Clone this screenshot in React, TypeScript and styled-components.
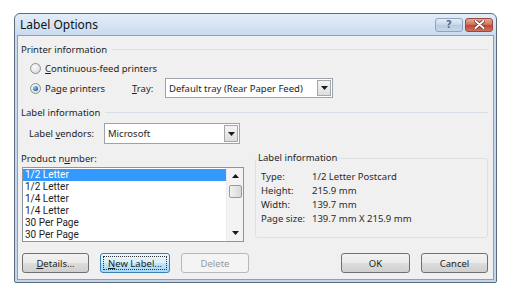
import React from 'react';
import styled, { createGlobalStyle } from 'styled-components';

const GlobalStyle = createGlobalStyle`
  html, body {
    margin: 0;
    padding: 0;
    background: #fff;
  }
  body {
    font-family: "Noto Sans", "Open Sans", sans-serif;
    font-size: 9.5px;
    color: #1e1e1e;
  }
`;

const Desktop = styled.div`
  width: 511px;
  height: 304px;
  padding: 13px 0 0 14px;
  box-sizing: border-box;
`;

const Window = styled.div`
  width: 483px;
  height: 270px;
  box-sizing: border-box;
  border: 1px solid #5d6c7d;
  border-radius: 6px 6px 2px 2px;
  background: linear-gradient(#e3edf8, #c9dbef 21px, #c3d6ec);
  display: flex;
  flex-direction: column;
  padding: 0 2px 2px 2px;
`;

const TitleBar = styled.div`
  height: 21px;
  display: flex;
  align-items: center;
  padding-left: 3px;
`;

const TitleText = styled.div`
  flex: 1;
  font-size: 12px;
  color: #111;
`;

const CaptionButton = styled.div<{ $close?: boolean }>`
  width: 28px;
  height: 14px;
  box-sizing: border-box;
  border: 1px solid ${({ $close }) => ($close ? '#9a4a3c' : '#8ea3bd')};
  border-radius: 3px;
  margin-left: 2px;
  display: flex;
  align-items: center;
  justify-content: center;
  background: ${({ $close }) =>
    $close
      ? 'linear-gradient(#e7a79a, #d47562 45%, #c2432e 50%, #d0705a)'
      : 'linear-gradient(#e4edf7, #cbd9ea 45%, #b9cbe1 50%, #c7d7ea)'};
  color: #5a6d86;
  font-family: "DejaVu Sans", sans-serif;
  font-weight: bold;
  font-size: 10px;
  &:last-child {
    margin-right: 1px;
  }
`;

const Client = styled.div`
  flex: 1;
  background: #f0f0f0;
  border: 1px solid #8aa0b8;
  padding: 0 5px 0 4px;
  display: flex;
  flex-direction: column;
`;

const SectionHeader = styled.div<{ $top: number }>`
  display: flex;
  align-items: center;
  height: 14px;
  margin-top: ${({ $top }) => $top}px;
  margin-left: -1px;
  &::after {
    content: '';
    flex: 1;
    height: 0;
    border-top: 1px solid #d9dfe6;
    margin-left: 5px;
  }
`;

const Row = styled.div<{ $top: number; $h: number; $indent: number }>`
  display: flex;
  align-items: center;
  height: ${({ $h }) => $h}px;
  margin-top: ${({ $top }) => $top}px;
  padding-left: ${({ $indent }) => $indent}px;
`;

const RadioOption = styled.div<{ $width?: number }>`
  display: flex;
  align-items: center;
  width: ${({ $width }) => ($width ? `${$width}px` : 'auto')};
`;

const RadioCircle = styled.span<{ $checked?: boolean }>`
  width: 11px;
  height: 11px;
  box-sizing: border-box;
  border-radius: 50%;
  border: 1px solid #8d9196;
  background: radial-gradient(circle at 40% 35%, #fdfdfd, #d9dadc 80%);
  margin-right: 4px;
  display: flex;
  align-items: center;
  justify-content: center;
  &::after {
    content: '';
    display: ${({ $checked }) => ($checked ? 'block' : 'none')};
    width: 5px;
    height: 5px;
    border-radius: 50%;
    background: radial-gradient(circle at 35% 35%, #8fd0f5, #1b5f93 75%);
  }
`;

const FieldLabel = styled.span<{ $width: number }>`
  width: ${({ $width }) => $width}px;
  flex-shrink: 0;
`;

const Combo = styled.div<{ $width: number }>`
  width: ${({ $width }) => $width}px;
  height: 100%;
  box-sizing: border-box;
  border: 1px solid #9da3ab;
  background: #fff;
  display: flex;
  align-items: center;
  padding: 1px 1px 1px 3px;
`;

const ComboText = styled.span`
  flex: 1;
`;

const DropButton = styled.span`
  width: 14px;
  height: 100%;
  box-sizing: border-box;
  border: 1px solid #a4a8ad;
  background: linear-gradient(#f4f4f4, #dedede);
  display: flex;
  align-items: center;
  justify-content: center;
`;

const Middle = styled.div`
  display: flex;
  align-items: flex-start;
`;

const LeftColumn = styled.div`
  width: 223px;
  display: flex;
  flex-direction: column;
`;

const PlainLabel = styled.div`
  height: 14px;
  display: flex;
  align-items: center;
  margin-top: 7px;
  margin-left: -1px;
`;

const ListBox = styled.div`
  margin-top: 2px;
  height: 75px;
  box-sizing: border-box;
  border: 1px solid #8f959c;
  background: #fff;
  display: flex;
`;

const ListItems = styled.div`
  flex: 1;
  padding-top: 1px;
  font-family: Roboto, "Noto Sans", sans-serif;
  font-size: 10px;
`;

const ListItem = styled.div<{ $selected?: boolean }>`
  height: 12px;
  line-height: 12px;
  padding-left: 2px;
  background: ${({ $selected }) => ($selected ? '#3399ff' : 'transparent')};
  color: ${({ $selected }) => ($selected ? '#fff' : '#1e1e1e')};
`;

const ScrollBar = styled.div`
  width: 16px;
  background: #f3f3f3;
  border-left: 1px solid #ececec;
  display: flex;
  flex-direction: column;
  align-items: center;
`;

const ScrollArrow = styled.div`
  height: 16px;
  width: 100%;
  display: flex;
  align-items: center;
  justify-content: center;
`;

const ScrollThumb = styled.div`
  width: 13px;
  height: 13px;
  box-sizing: border-box;
  margin-top: 1px;
  border: 1px solid #9a9a9a;
  border-radius: 2px;
  background: linear-gradient(90deg, #f2f2f2, #d8d8d8);
`;

const ScrollSpacer = styled.div`
  flex: 1;
`;

const GroupBox = styled.fieldset`
  margin: 7px 0 0 11px;
  width: 234px;
  height: 87px;
  box-sizing: border-box;
  border: 1px solid #dcdfe3;
  border-radius: 3px;
  padding: 4px 5px 0 5px;
`;

const GroupLegend = styled.legend`
  padding: 0 1px;
  margin-left: -4px;
  line-height: 14px;
`;

const InfoGrid = styled.div`
  display: grid;
  grid-template-columns: 51px 1fr;
  grid-auto-rows: 14px;
  align-items: center;
  color: #2a2a2a;
`;

const ButtonRow = styled.div`
  display: flex;
  align-items: center;
  margin-top: 11px;
  gap: 11px;
`;

const Spacer = styled.div`
  flex: 1;
`;

const PushButton = styled.div<{ $width: number; $focused?: boolean; $disabled?: boolean }>`
  width: ${({ $width }) => $width}px;
  height: 20px;
  box-sizing: border-box;
  border: 1px solid ${({ $focused, $disabled }) => ($focused ? '#3c7fb1' : $disabled ? '#b5b8bc' : '#707070')};
  border-radius: 3px;
  padding: 2px;
  background: ${({ $focused, $disabled }) =>
    $focused
      ? 'linear-gradient(#eaf6fd, #d9f0fc 48%, #bee6fd 50%, #a7d9f5)'
      : $disabled
      ? '#f4f4f4'
      : 'linear-gradient(#f2f2f2, #ebebeb 48%, #dddddd 50%, #cfcfcf)'};
  color: ${({ $disabled }) => ($disabled ? '#9a9a9a' : '#1e1e1e')};
  display: flex;
`;

const ButtonFace = styled.div<{ $focused?: boolean }>`
  flex: 1;
  display: flex;
  align-items: center;
  justify-content: center;
  border: 1px dotted ${({ $focused }) => ($focused ? '#333' : 'transparent')};
`;

const Tri = ({ up }: { up?: boolean }) => (
  <svg width="7" height="4" viewBox="0 0 7 4">
    <path d={up ? 'M0 4 L3.5 0 L7 4 Z' : 'M0 0 L7 0 L3.5 4 Z'} fill="#1a1a1a" />
  </svg>
);

const CloseIcon = () => (
  <svg width="11" height="9" viewBox="0 0 11 9">
    <path d="M1.5 1 L9.5 8 M9.5 1 L1.5 8" stroke="#5e2418" strokeWidth="3.4" strokeLinecap="round" />
    <path d="M1.5 1 L9.5 8 M9.5 1 L1.5 8" stroke="#fff" strokeWidth="2" strokeLinecap="round" />
  </svg>
);

const products = ['1/2 Letter', '1/2 Letter', '1/4 Letter', '1/4 Letter', '30 Per Page', '30 Per Page'];

const info: [string, string][] = [
  ['Type:', '1/2 Letter Postcard'],
  ['Height:', '215.9 mm'],
  ['Width:', '139.7 mm'],
  ['Page size:', '139.7 mm X 215.9 mm'],
];

export default function App() {
  return (
    <Desktop>
      <GlobalStyle />
      <Window>
        <TitleBar>
          <TitleText>Label Options</TitleText>
          <CaptionButton>?</CaptionButton>
          <CaptionButton $close>
            <CloseIcon />
          </CaptionButton>
        </TitleBar>
        <Client>
          <SectionHeader $top={6}>Printer information</SectionHeader>
          <Row $top={4} $h={16} $indent={8}>
            <RadioOption>
              <RadioCircle />
              <span><u>C</u>ontinuous-feed printers</span>
            </RadioOption>
          </Row>
          <Row $top={2} $h={20} $indent={8}>
            <RadioOption $width={102}>
              <RadioCircle $checked />
              <span>Pa<u>g</u>e printers</span>
            </RadioOption>
            <FieldLabel $width={33}><u>T</u>ray:</FieldLabel>
            <Combo $width={168}>
              <ComboText>Default tray (Rear Paper Feed)</ComboText>
              <DropButton><Tri /></DropButton>
            </Combo>
          </Row>
          <SectionHeader $top={7}>Label information</SectionHeader>
          <Row $top={4} $h={21} $indent={7}>
            <FieldLabel $width={75}>Label <u>v</u>endors:</FieldLabel>
            <Combo $width={136}>
              <ComboText>Microsoft</ComboText>
              <DropButton><Tri /></DropButton>
            </Combo>
          </Row>
          <Middle>
            <LeftColumn>
              <PlainLabel>Product n<u>u</u>mber:</PlainLabel>
              <ListBox>
                <ListItems>
                  {products.map((p, i) => (
                    <ListItem key={i} $selected={i === 0}>{p}</ListItem>
                  ))}
                </ListItems>
                <ScrollBar>
                  <ScrollArrow><Tri up /></ScrollArrow>
                  <ScrollThumb />
                  <ScrollSpacer />
                  <ScrollArrow><Tri /></ScrollArrow>
                </ScrollBar>
              </ListBox>
            </LeftColumn>
            <GroupBox>
              <GroupLegend>Label information</GroupLegend>
              <InfoGrid>
                {info.map(([k, v]) => (
                  <React.Fragment key={k}>
                    <span>{k}</span>
                    <span>{v}</span>
                  </React.Fragment>
                ))}
              </InfoGrid>
            </GroupBox>
          </Middle>
          <ButtonRow>
            <PushButton $width={67}>
              <ButtonFace><u>D</u>etails...</ButtonFace>
            </PushButton>
            <PushButton $width={70} $focused>
              <ButtonFace $focused><u>N</u>ew Label...</ButtonFace>
            </PushButton>
            <PushButton $width={68} $disabled>
              <ButtonFace>Delete</ButtonFace>
            </PushButton>
            <Spacer />
            <PushButton $width={69}>
              <ButtonFace>OK</ButtonFace>
            </PushButton>
            <PushButton $width={67}>
              <ButtonFace>Cancel</ButtonFace>
            </PushButton>
          </ButtonRow>
        </Client>
      </Window>
    </Desktop>
  );
}
